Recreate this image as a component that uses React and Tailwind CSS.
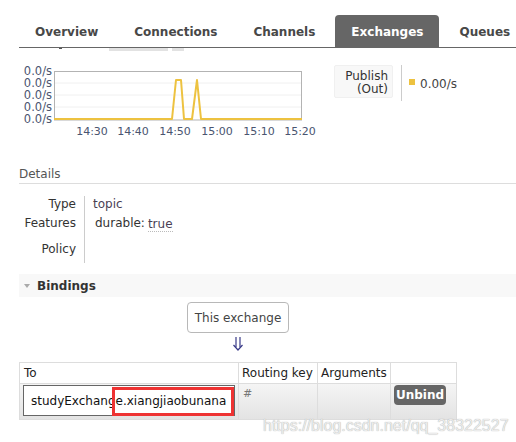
import React from "react";

const TABS = ["Overview", "Connections", "Channels", "Exchanges", "Queues"];

// chart line in page coords, offset by chart origin (x 19, y 60)
const LINE = [
  [54, 118], [172, 118], [176, 79], [181, 79], [184, 118],
  [192, 118], [197, 79], [201, 118], [302, 118],
];

function RateChart() {
  const pts = LINE.map(([x, y]) => `${x - 19},${y - 60}`).join(" ");
  const yLabels = [70, 82, 94, 106, 118];
  const xLabels = [
    ["14:30", 92], ["14:40", 133], ["14:50", 175],
    ["15:00", 217], ["15:10", 259], ["15:20", 300],
  ];
  return (
    <svg width="315" height="80" className="shrink-0" style={{ fontFamily: "'DejaVu Sans', Verdana, sans-serif" }}>
      {yLabels.map((y) => (
        <text key={y} x={52 - 19} y={y - 60 + 4} textAnchor="end" fontSize="11.5" fill="#4a5570">
          0.0/s
        </text>
      ))}
      {[82, 94, 106].map((y) => (
        <line key={y} x1={55 - 19} x2={301 - 19} y1={y - 60} y2={y - 60} stroke="#f0f0f0" />
      ))}
      <rect x={54.5 - 19} y={70.5 - 60} width={247} height={48.5} fill="none" stroke="#b3b3b3" />
      <polyline points={pts} fill="none" stroke="#edc240" strokeWidth="2" strokeLinejoin="round" />
      {xLabels.map(([t, x]) => (
        <text key={t} x={x - 19} y={134 - 60} textAnchor="middle" fontSize="11" fill="#4a5570">
          {t}
        </text>
      ))}
    </svg>
  );
}

export default function App() {
  return (
    <div
      className="relative w-[516px] h-[442px] overflow-hidden bg-white text-[12px] text-[#333]"
      style={{ fontFamily: "'DejaVu Sans', Verdana, sans-serif" }}
    >
      {/* tabs */}
      <div className="pt-[15px] pl-[19px]">
        <div className="flex gap-[4px] border-b border-[#666] h-[33px] items-stretch">
          {TABS.map((t) => (
            <div
              key={t}
              className={
                t === "Exchanges"
                  ? "px-[16px] pt-[2px] flex items-center font-bold text-white bg-[#666] rounded-t-[4px] whitespace-nowrap"
                  : "px-[16px] pt-[2px] flex items-center font-bold text-[#484848] whitespace-nowrap"
              }
            >
              {t}
            </div>
          ))}
        </div>
        {/* scrolled-away controls peeking out */}
        <div className="flex h-[3px]">
          <div className="ml-[40px] w-[3px] h-[1px] bg-[#555]" />
          <div className="ml-[47px] w-[59px] bg-[#e2e2e2]" />
          <div className="ml-[4px] w-[12px] bg-[#e2e2e2]" />
        </div>
      </div>

      <div className="pl-[19px]">
        {/* chart + legend */}
        <div className="flex mt-[10px]">
          <RateChart />
          <div className="flex items-start mt-[4px]">
            <div className="w-[59px] h-[33px] bg-[#f8f8f8] border border-[#f0f0f0] rounded-[2px] text-right pr-[4px] pt-[4px] leading-[13px] text-[#333]">
              Publish
              <br />
              (Out)
            </div>
            <div className="ml-[8px] w-px h-[36px] bg-[#ccc]" />
            <div className="ml-[7px] mt-[14px] w-[6px] h-[6px] bg-[#edc240]" />
            <div className="ml-[5px] mt-[10px] text-[#444]">0.00/s</div>
          </div>
        </div>

        {/* details */}
        <div className="mt-[26px] text-[#555] pb-[2px] border-b border-[#ddd] leading-[14px]">Details</div>
        <div className="grid grid-cols-[66px_auto] mt-[12px] w-fit">
          <div className="h-[16px] flex items-center justify-end pr-[8px] border-r border-[#ccc] text-[#333]">Type</div>
          <div className="h-[16px] flex items-center pl-[8px] text-[#4a3f55]">topic</div>
          <div className="h-[22px] flex items-center justify-end pr-[8px] border-r border-[#ccc] text-[#333]">Features</div>
          <div className="h-[22px] flex items-center pl-[10px] text-[#333]">
            durable:
            <span className="ml-[3px] mt-[4px] text-[#4a3f55] border-b border-dotted border-[#bbb] leading-[13px]">true</span>
          </div>
          <div className="h-[29px] flex items-center justify-end pr-[8px] border-r border-[#ccc] text-[#333]">Policy</div>
          <div className="h-[29px]" />
        </div>

        {/* bindings */}
        <div className="mt-[11px] h-[23px] bg-[#f8f8f8] flex items-center">
          <svg width="6" height="4" className="ml-[5px]">
            <polygon points="0,0 6,0 3,4" fill="#aaa" />
          </svg>
          <span className="ml-[7px] font-bold text-[#333]">Bindings</span>
        </div>

        <div className="w-[438px] flex flex-col items-center">
          <div className="mt-[5px] h-[31px] px-[7px] flex items-center border border-[#b8b8b8] rounded-[4px] text-[#444]">
            This exchange
          </div>
          <svg width="10" height="14" className="mt-[4px]" aria-label="⇓">
            <line x1="3" y1="0" x2="3" y2="10" stroke="#383a88" strokeWidth="1.2" />
            <line x1="7" y1="0" x2="7" y2="10" stroke="#383a88" strokeWidth="1.2" />
            <polyline points="0.5,8 5,13 9.5,8" fill="none" stroke="#383a88" strokeWidth="1.2" />
          </svg>
          <table className="mt-[11px] w-[438px] table-fixed border-collapse text-[#222]">
            <thead>
              <tr className="h-[21px]">
                <th className="w-[219px] border border-[#ddd] text-left font-normal px-[4px]">To</th>
                <th className="w-[79px] border border-[#ddd] text-left font-normal px-[3px] whitespace-nowrap">Routing key</th>
                <th className="w-[73px] border border-[#ddd] text-left font-normal px-[3px]">Arguments</th>
                <th className="border border-[#ddd]" />
              </tr>
            </thead>
            <tbody>
              <tr className="h-[36px] bg-gradient-to-b from-[#f5f5f5] to-[#e3e3e3]">
                <td className="border border-[#ddd] px-[3px] py-0 align-top">
                  <div className="relative mt-[1px] h-[31px] border border-[#666] bg-white flex items-center pl-[7px] text-[#111] whitespace-nowrap">
                    studyExchange.xiangjiaobunana
                    <div className="absolute left-[88px] top-[1px] w-[122px] h-[29px] border-[3px] border-[#ee3333]" />
                  </div>
                </td>
                <td className="border border-[#ddd] px-[4px] align-top text-[11px] text-[#777] pt-[2px]">#</td>
                <td className="border border-[#ddd]" />
                <td className="border border-[#ddd] px-[3px] align-top">
                  <div className="mt-[1px] w-[52px] h-[20px] bg-[#666] rounded-[4px] text-white font-bold flex items-center justify-center">
                    Unbind
                  </div>
                </td>
              </tr>
            </tbody>
          </table>
        </div>
      </div>

      {/* watermark */}
      <div
        className="absolute left-[263px] top-[414px] text-[16px] text-[#ececec] whitespace-nowrap [text-shadow:0_0_1px_#9a9a9a]"
        style={{ fontFamily: "'Liberation Sans', Arial, sans-serif" }}
      >
        https://blog.csdn.net/qq_38322527
      </div>
    </div>
  );
}
